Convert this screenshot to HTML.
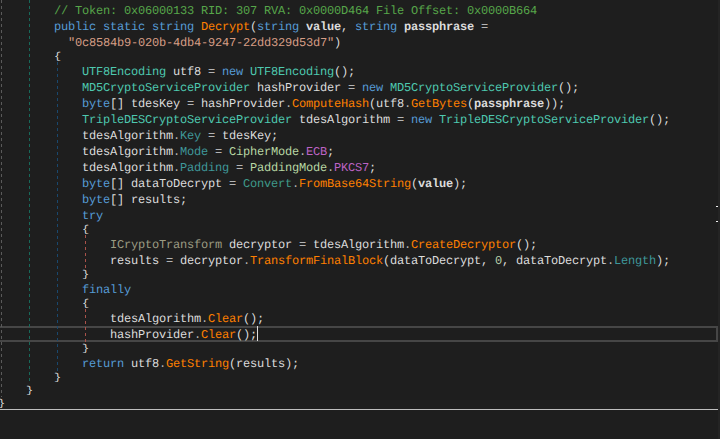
<!DOCTYPE html>
<html><head><meta charset="utf-8"><title>Decrypt</title>
<style>
html,body{margin:0;padding:0;background:#1e1e1e}
body{width:720px;height:439px;position:relative;overflow:hidden;font-family:"Liberation Mono",monospace;font-size:12.0px;letter-spacing:-0.2012px;text-rendering:geometricPrecision;color:#DCDCDC}
.ln{position:absolute;white-space:pre;height:16px;line-height:16px}
.ln.T span{position:relative;top:1px}
.ln.B{height:13px;line-height:13px}
.ln.B span{display:inline-block;transform:translateY(0.5px) scaleY(0.83);transform-origin:50% 50%}
.prm{font-weight:bold}
.cmt{color:#57A64A}
.kw{color:#569CD6}
.str{color:#D69D85}
.typ{color:#4EC9B0}
.mth{color:#FF8000}
.pun{color:#DCDCDC}
.op{color:#B4B4B4}
.loc{color:#DCDCDC}
.prm{color:#DCDCDC}
.pnc{color:#DCDCDC}
.prop{color:#3E989A}
.enm{color:#B8D7A3}
.efld{color:#BD63C5}
.styp{color:#3E9A8A}
.ifc{color:#9B9B82}
.num{color:#B5CEA8}
.g{position:absolute;width:1px;background:repeating-linear-gradient(to bottom,currentColor 0,currentColor 3px,transparent 3px,transparent 6px)}
.hl{position:absolute;left:-4px;top:326px;width:718px;height:12px;border:2px solid #464646}
.caret{position:absolute;left:257px;top:326px;width:1px;height:15px;background:#DCDCDC}
.hr{position:absolute;left:0;top:409px;width:718px;height:1px;background:#bebebe}
.sb{position:absolute;left:718px;top:0;width:2px;height:439px;background:#242424}
.mk{position:absolute;left:716px;width:2px;height:1px;background:#f0f0f0}
</style></head><body>
<div class="sb"></div>
<div class="hl"></div>
<div class="g" style="left:1px;top:0px;height:397px;color:#5a5a5a"></div><div class="g" style="left:29px;top:0px;height:384px;color:#17695a"></div><div class="g" style="left:57px;top:62px;height:309px;color:#19486e"></div><div class="g" style="left:85px;top:235px;height:33px;color:#aa524a"></div><div class="g" style="left:85px;top:309px;height:33px;color:#aa524a"></div>
<div class="ln T" style="top:2px;left:54px"><span class="cmt">// Token: 0x06000133 RID: 307 RVA: 0x0000D464 File Offset: 0x0000B664</span></div>
<div class="ln T" style="top:18px;left:54px"><span class="kw">public</span><span class="loc"> </span><span class="kw">static</span><span class="loc"> </span><span class="kw">string</span><span class="loc"> </span><span class="mth">Decrypt</span><span class="pnc">(</span><span class="kw">string</span><span class="loc"> </span><span class="prm">value</span><span class="pnc">,</span><span class="loc"> </span><span class="kw">string</span><span class="loc"> </span><span class="prm">passphrase</span><span class="loc"> </span><span class="op">=</span></div>
<div class="ln T" style="top:34px;left:68px"><span class="str">"0c8584b9-020b-4db4-9247-22dd329d53d7"</span><span class="pnc">)</span></div>
<div class="ln B" style="top:50px;left:54px"><span class="pnc">{</span></div>
<div class="ln T" style="top:63px;left:82px"><span class="typ">UTF8Encoding</span><span class="loc"> utf8 </span><span class="op">=</span><span class="loc"> </span><span class="kw">new</span><span class="loc"> </span><span class="typ">UTF8Encoding</span><span class="pnc">();</span></div>
<div class="ln T" style="top:79px;left:82px"><span class="typ">MD5CryptoServiceProvider</span><span class="loc"> hashProvider </span><span class="op">=</span><span class="loc"> </span><span class="kw">new</span><span class="loc"> </span><span class="typ">MD5CryptoServiceProvider</span><span class="pnc">();</span></div>
<div class="ln T" style="top:95px;left:82px"><span class="kw">byte</span><span class="pnc">[]</span><span class="loc"> tdesKey </span><span class="op">=</span><span class="loc"> hashProvider</span><span class="op">.</span><span class="mth">ComputeHash</span><span class="pnc">(</span><span class="loc">utf8</span><span class="op">.</span><span class="mth">GetBytes</span><span class="pnc">(</span><span class="prm">passphrase</span><span class="pnc">));</span></div>
<div class="ln T" style="top:111px;left:82px"><span class="typ">TripleDESCryptoServiceProvider</span><span class="loc"> tdesAlgorithm </span><span class="op">=</span><span class="loc"> </span><span class="kw">new</span><span class="loc"> </span><span class="typ">TripleDESCryptoServiceProvider</span><span class="pnc">();</span></div>
<div class="ln T" style="top:127px;left:82px"><span class="loc">tdesAlgorithm</span><span class="op">.</span><span class="prop">Key</span><span class="loc"> </span><span class="op">=</span><span class="loc"> tdesKey</span><span class="pnc">;</span></div>
<div class="ln T" style="top:143px;left:82px"><span class="loc">tdesAlgorithm</span><span class="op">.</span><span class="prop">Mode</span><span class="loc"> </span><span class="op">=</span><span class="loc"> </span><span class="enm">CipherMode</span><span class="op">.</span><span class="efld">ECB</span><span class="pnc">;</span></div>
<div class="ln T" style="top:159px;left:82px"><span class="loc">tdesAlgorithm</span><span class="op">.</span><span class="prop">Padding</span><span class="loc"> </span><span class="op">=</span><span class="loc"> </span><span class="enm">PaddingMode</span><span class="op">.</span><span class="efld">PKCS7</span><span class="pnc">;</span></div>
<div class="ln T" style="top:175px;left:82px"><span class="kw">byte</span><span class="pnc">[]</span><span class="loc"> dataToDecrypt </span><span class="op">=</span><span class="loc"> </span><span class="styp">Convert</span><span class="op">.</span><span class="mth">FromBase64String</span><span class="pnc">(</span><span class="prm">value</span><span class="pnc">);</span></div>
<div class="ln T" style="top:191px;left:82px"><span class="kw">byte</span><span class="pnc">[]</span><span class="loc"> results</span><span class="pnc">;</span></div>
<div class="ln T" style="top:207px;left:82px"><span class="kw">try</span></div>
<div class="ln B" style="top:223px;left:82px"><span class="pnc">{</span></div>
<div class="ln T" style="top:236px;left:110px"><span class="ifc">ICryptoTransform</span><span class="loc"> decryptor </span><span class="op">=</span><span class="loc"> tdesAlgorithm</span><span class="op">.</span><span class="mth">CreateDecryptor</span><span class="pnc">();</span></div>
<div class="ln T" style="top:252px;left:110px"><span class="loc">results </span><span class="op">=</span><span class="loc"> decryptor</span><span class="op">.</span><span class="mth">TransformFinalBlock</span><span class="pnc">(</span><span class="loc">dataToDecrypt</span><span class="pnc">,</span><span class="loc"> </span><span class="num">0</span><span class="pnc">,</span><span class="loc"> dataToDecrypt</span><span class="op">.</span><span class="prop">Length</span><span class="pnc">);</span></div>
<div class="ln B" style="top:268px;left:82px"><span class="pnc">}</span></div>
<div class="ln T" style="top:281px;left:82px"><span class="kw">finally</span></div>
<div class="ln B" style="top:297px;left:82px"><span class="pnc">{</span></div>
<div class="ln T" style="top:310px;left:110px"><span class="loc">tdesAlgorithm</span><span class="op">.</span><span class="mth">Clear</span><span class="pnc">();</span></div>
<div class="ln T" style="top:326px;left:110px"><span class="loc">hashProvider</span><span class="op">.</span><span class="mth">Clear</span><span class="pnc">();</span></div>
<div class="ln B" style="top:342px;left:82px"><span class="pnc">}</span></div>
<div class="ln T" style="top:355px;left:82px"><span class="kw">return</span><span class="loc"> utf8</span><span class="op">.</span><span class="mth">GetString</span><span class="pnc">(</span><span class="loc">results</span><span class="pnc">);</span></div>
<div class="ln B" style="top:371px;left:54px"><span class="pnc">}</span></div>
<div class="ln B" style="top:384px;left:26px"><span class="pnc">}</span></div>
<div class="ln B" style="top:397px;left:-2px"><span class="pnc">}</span></div>
<div class="caret"></div>
<div class="hr"></div>
<div class="mk" style="top:206px"></div><div class="mk" style="top:221px"></div>
</body></html>
